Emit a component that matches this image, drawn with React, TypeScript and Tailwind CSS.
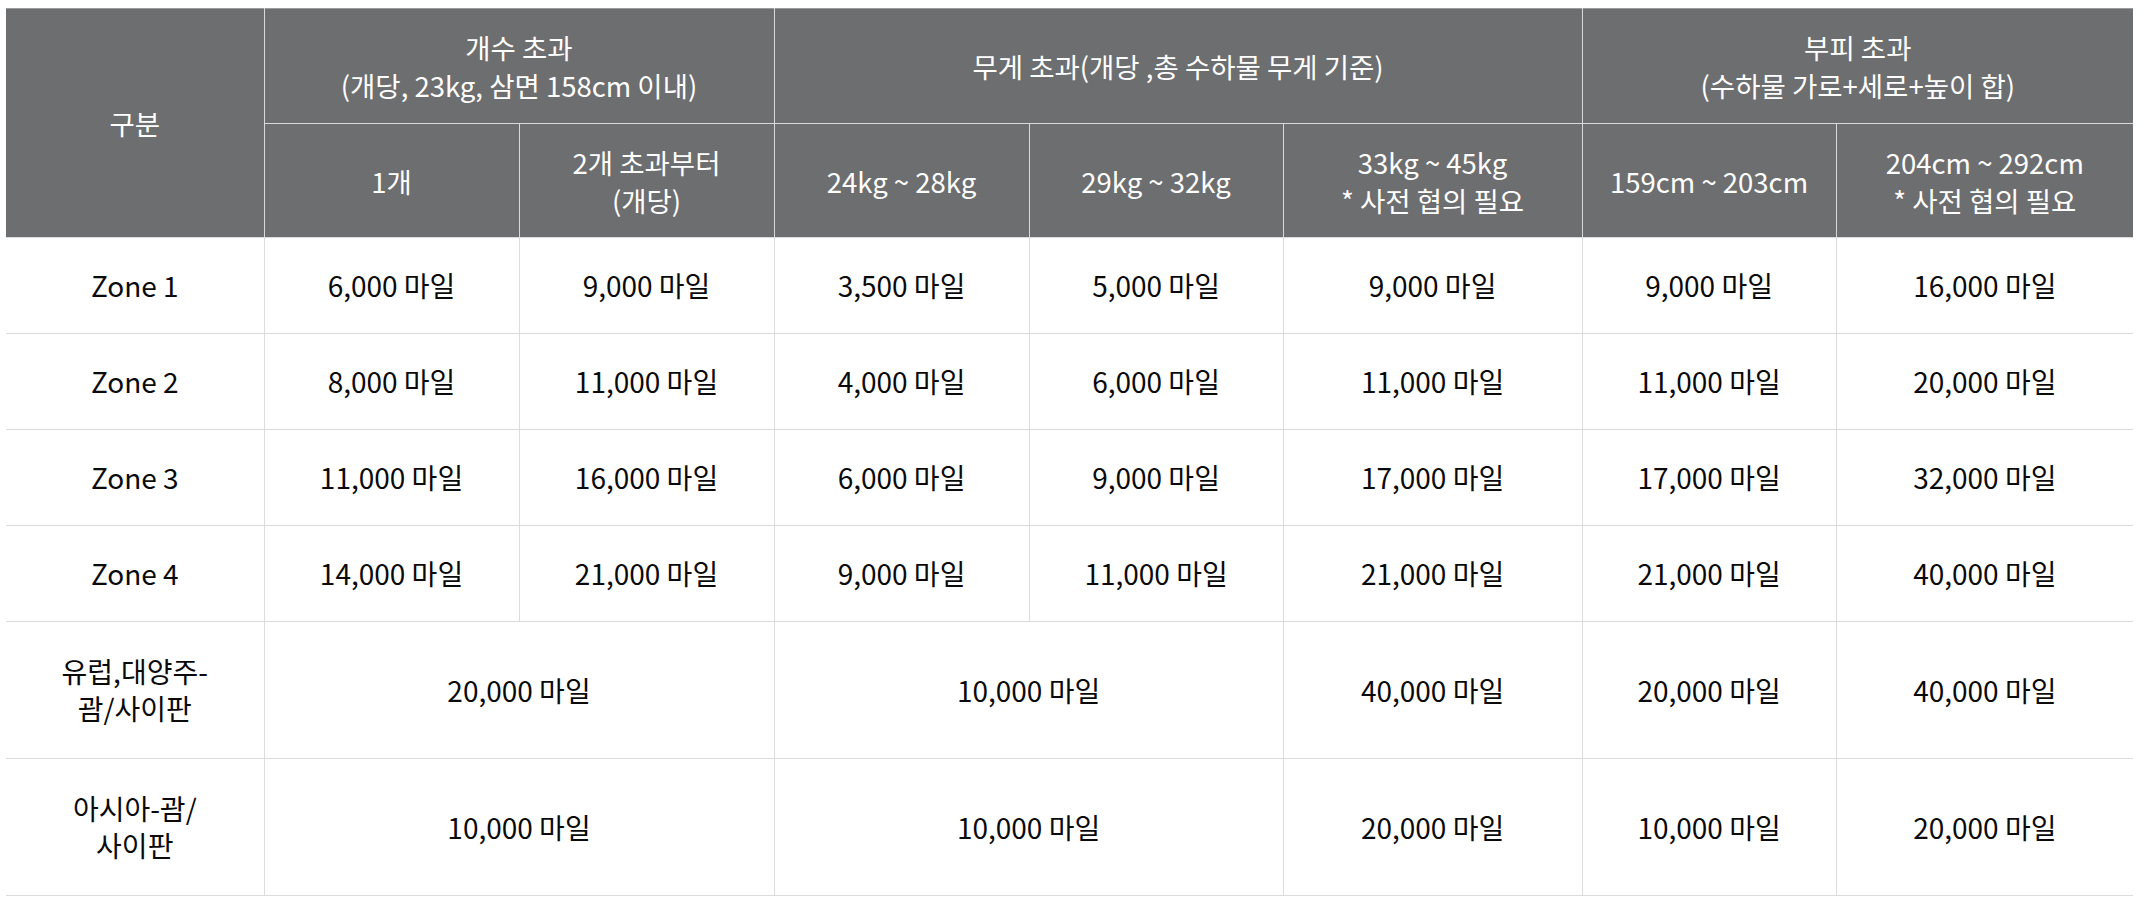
const widths = [258, 255, 255, 255, 254, 299, 254, 297]

type Cell = { text: string; span?: number }

const zoneRows: { label: string; cells: Cell[] }[] = [
  { label: 'Zone 1', cells: ['6,000', '9,000', '3,500', '5,000', '9,000', '9,000', '16,000'].map(t => ({ text: t })) },
  { label: 'Zone 2', cells: ['8,000', '11,000', '4,000', '6,000', '11,000', '11,000', '20,000'].map(t => ({ text: t })) },
  { label: 'Zone 3', cells: ['11,000', '16,000', '6,000', '9,000', '17,000', '17,000', '32,000'].map(t => ({ text: t })) },
  { label: 'Zone 4', cells: ['14,000', '21,000', '9,000', '11,000', '21,000', '21,000', '40,000'].map(t => ({ text: t })) },
]

const specialRows: { label: [string, string]; cells: Cell[] }[] = [
  {
    label: ['유럽,대양주-', '괌/사이판'],
    cells: [{ text: '20,000', span: 2 }, { text: '10,000', span: 2 }, { text: '40,000' }, { text: '20,000' }, { text: '40,000' }],
  },
  {
    label: ['아시아-괌/', '사이판'],
    cells: [{ text: '10,000', span: 2 }, { text: '10,000', span: 2 }, { text: '20,000' }, { text: '10,000' }, { text: '20,000' }],
  },
]

const th = 'bg-[#6d6e70] text-white font-normal text-center align-middle border border-[#d9d9d9] text-[27.5px] leading-[38px]'
const td = 'text-center align-middle border border-[#dcdcdc] text-[#0a0a0a]'

export default function App() {
  return (
    <div
      className="min-h-screen bg-white pl-[6px] pt-[8px] text-[28px] leading-[37px]"
      style={{ fontFamily: '"Noto Sans CJK KR", "Noto Sans", sans-serif' }}
    >
      <table className="table-fixed border-collapse w-[2127px] border-x-0 [&_th:first-child]:border-l-0 [&_td:first-child]:border-l-0 [&_th:last-child]:border-r-0 [&_td:last-child]:border-r-0">
        <colgroup>
          {widths.map((w, i) => (
            <col key={i} style={{ width: w }} />
          ))}
        </colgroup>
        <thead>
          <tr className="h-[115px]">
            <th rowSpan={2} className={`${th} border-t-[#9b9b9b]`}>구분</th>
            <th colSpan={2} className={`${th} border-t-[#9b9b9b]`}>
              개수 초과
              <br />
              (개당, 23kg, 삼면 158cm 이내)
            </th>
            <th colSpan={3} className={`${th} border-t-[#9b9b9b]`}>무게 초과(개당 ,총 수하물 무게 기준)</th>
            <th colSpan={2} className={`${th} border-t-[#9b9b9b]`}>
              부피 초과
              <br />
              (수하물 가로+세로+높이 합)
            </th>
          </tr>
          <tr className="h-[114px]">
            <th className={th}>1개</th>
            <th className={th}>
              2개 초과부터
              <br />
              (개당)
            </th>
            <th className={th}>24kg ~ 28kg</th>
            <th className={th}>29kg ~ 32kg</th>
            <th className={th}>
              33kg ~ 45kg
              <br />* 사전 협의 필요
            </th>
            <th className={th}>159cm ~ 203cm</th>
            <th className={`${th} border-r-0`}>
              204cm ~ 292cm
              <br />* 사전 협의 필요
            </th>
          </tr>
        </thead>
        <tbody>
          {zoneRows.map(row => (
            <tr key={row.label} className="h-[96px]">
              <td className={td}>{row.label}</td>
              {row.cells.map((c, i) => (
                <td key={i} className={td}>
                  {c.text} 마일
                </td>
              ))}
            </tr>
          ))}
          {specialRows.map(row => (
            <tr key={row.label[0]} className="h-[137px]">
              <td className={td}>
                {row.label[0]}
                <br />
                {row.label[1]}
              </td>
              {row.cells.map((c, i) => (
                <td key={i} colSpan={c.span} className={td}>
                  {c.text} 마일
                </td>
              ))}
            </tr>
          ))}
        </tbody>
      </table>
    </div>
  )
}
